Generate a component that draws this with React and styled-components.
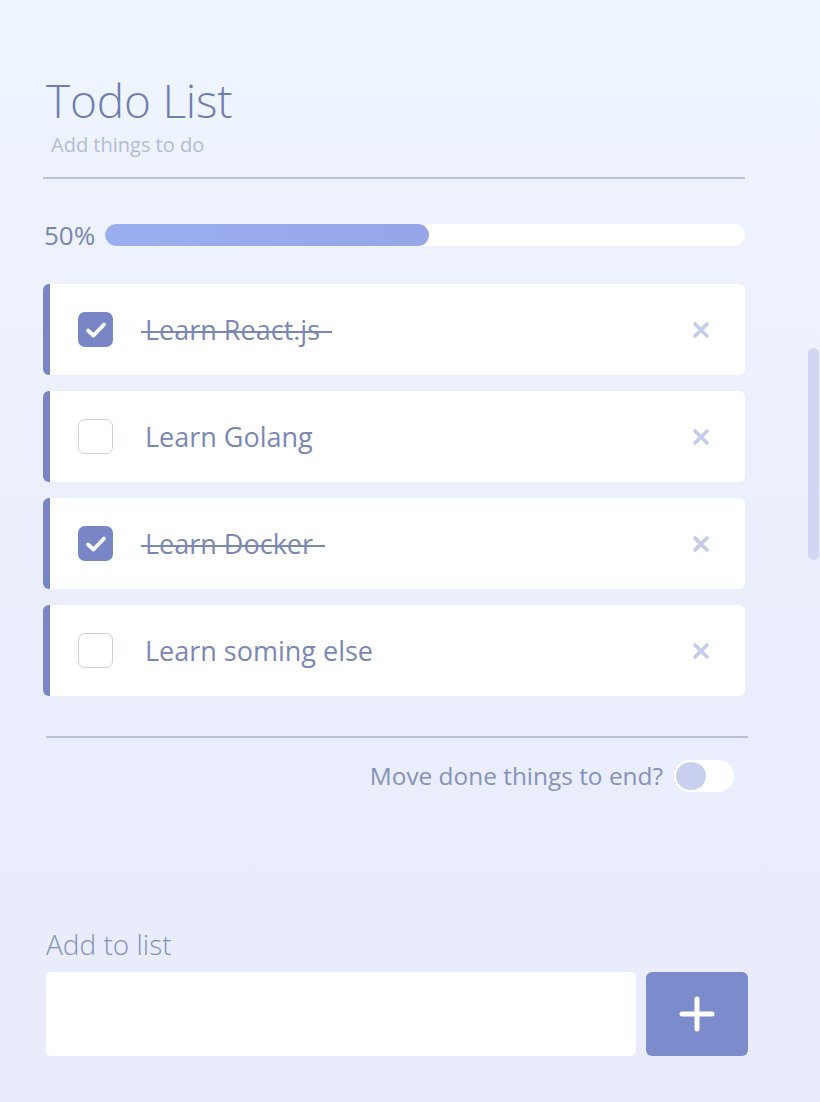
import { useState } from "react";
import styled, { createGlobalStyle } from "styled-components";

const GlobalStyle = createGlobalStyle`
	html, body {
		margin: 0;
		padding: 0;
	}
	body {
		font-family: "Open Sans", "Noto Sans", sans-serif;
	}
`

const Page = styled.div`
	position: relative;
	min-height: 1102px;
	box-sizing: border-box;
	padding: 75px 0px 0px 43px;
	background: linear-gradient(180deg, #eff5fe 0%, #ebeffc 50%, #e9ebfb 100%);
	overflow: hidden;
`

const ScrollThumb = styled.div`
	position: absolute;
	top: 348px;
	right: 1px;
	width: 11px;
	height: 212px;
	border-radius: 6px;
	background: #d1d6f2;
`

const Main = styled.div`
	width: 702px;
`

const Header = styled.header`
	padding: 0px 0px 0px 3px;
	border-bottom: 2px solid #b9c0d8;
	height: 104px;
	box-sizing: border-box;
`

const Title = styled.h1`
	margin: 0;
	font-size: 46px;
	font-weight: 300;
	line-height: 50px;
	color: #6f7db1;
	letter-spacing: -0.2px;
`

const Subtitle = styled.p`
	margin: 7px 0px 0px 5px;
	font-size: 20px;
	line-height: 26px;
	color: #b3bbd6;
`

const ProgressRow = styled.div`
	display: flex;
	align-items: center;
	gap: 10px;
	margin: 45px 0px 0px 1px;
	height: 22px;
`

const Percent = styled.span`
	font-size: 26px;
	line-height: 22px;
	color: #7a86b0;
`

const Track = styled.div`
	flex: 1;
	height: 22px;
	border-radius: 11px;
	background: #ffffff;
	overflow: hidden;
`

const Fill = styled.div`
	height: 100%;
	border-radius: 11px;
	background: linear-gradient(90deg, #9aaeef, #96a6e8);
`

const List = styled.ul`
	list-style: none;
	margin: 38px 0px 0px 0px;
	padding: 0;
	display: flex;
	flex-direction: column;
	gap: 16px;
`

const Item = styled.li`
	display: flex;
	align-items: center;
	height: 91px;
	box-sizing: border-box;
	background: #ffffff;
	border-left: 7px solid #7886c5;
	border-radius: 6px;
	padding: 0px 34px 0px 28px;
`

const Check = styled.span`
	flex: none;
	width: 35px;
	height: 35px;
	box-sizing: border-box;
	border-radius: 7px;
	display: flex;
	align-items: center;
	justify-content: center;
	cursor: pointer;
	background: ${props => props.checked ? "#7886c5" : "#ffffff"};
	border: ${props => props.checked ? "none" : "1.5px solid #cdd1dd"};
`

const Label = styled.span`
	margin-left: 32px;
	flex: 1;
	font-size: 27px;
	color: #7b87b3;
	span {
		padding: 0px 12px 0px 4px;
		margin-left: -4px;
		background: ${props => props.done ? "linear-gradient(#7b87b3, #7b87b3) no-repeat 0 58% / 100% 2px" : "none"};
	}
`

const Remove = styled.button`
	border: none;
	background: none;
	padding: 0;
	width: 20px;
	height: 20px;
	cursor: pointer;
	display: flex;
	align-items: center;
	justify-content: center;
`

const Footer = styled.div`
	margin: 40px -3px 0px 3px;
	border-top: 2px solid #b9c0d8;
	padding-top: 22px;
	display: flex;
	justify-content: flex-end;
	align-items: center;
	gap: 11px;
`

const ToggleText = styled.span`
	font-size: 24.4px;
	line-height: 32px;
	color: #8692bb;
`

const Toggle = styled.button`
	width: 60px;
	height: 32px;
	border: none;
	padding: 2px;
	border-radius: 16px;
	background: #ffffff;
	display: flex;
	justify-content: ${props => props.on ? "flex-end" : "flex-start"};
	cursor: pointer;
	margin-right: 14px;
	&::before{
		content: "";
		width: 30px;
		height: 28px;
		border-radius: 50%;
		background: ${props => props.on ? "#7886c5" : "#c9cfef"};
	}
`

const AddSection = styled.section`
	margin: 136px -3px 0px 3px;
`

const AddLabel = styled.label`
	display: block;
	font-size: 28px;
	font-weight: 300;
	color: #8591bb;
	line-height: 32px;
`

const AddRow = styled.div`
	display: flex;
	gap: 10px;
	margin-top: 12px;
`

const AddInput = styled.input`
	width: 590px;
	height: 84px;
	box-sizing: border-box;
	border: none;
	border-radius: 5px;
	background: #ffffff;
	font-family: inherit;
	font-size: 22px;
	padding: 0px 18px;
	color: #7f8ab4;
	&:focus-visible{
		outline: none;
	}
`

const AddButton = styled.button`
	width: 102px;
	height: 84px;
	border: none;
	border-radius: 6px;
	background: #7b8bcb;
	display: flex;
	align-items: center;
	justify-content: center;
	cursor: pointer;
`

const CheckMark = () => (
	<svg width="22" height="18" viewBox="0 0 22 18" fill="none">
		<path d="M3 9.5 L8.5 14.5 L19 3.5" stroke="#ffffff" strokeWidth="3.8" strokeLinecap="round" strokeLinejoin="round" />
	</svg>
)

const Cross = () => (
	<svg width="18" height="18" viewBox="0 0 18 18">
		<path d="M3 3 L15 15 M15 3 L3 15" stroke="#c5cbe8" strokeWidth="3.6" strokeLinecap="round" />
	</svg>
)

const Plus = () => (
	<svg width="36" height="36" viewBox="0 0 36 36">
		<path d="M18 3 V33 M3 18 H33" stroke="#ffffff" strokeWidth="5" strokeLinecap="round" />
	</svg>
)

const App = () => {
	const [todos, setTodos] = useState([
		{ id: 1, text: "Learn React.js", done: true },
		{ id: 2, text: "Learn Golang", done: false },
		{ id: 3, text: "Learn Docker", done: true },
		{ id: 4, text: "Learn soming else", done: false },
	])
	const [moveDone, setMoveDone] = useState(false)
	const [value, setValue] = useState('')

	const toggle = (id) => setTodos(todos.map(t => t.id === id ? { ...t, done: !t.done } : t))
	const remove = (id) => setTodos(todos.filter(t => t.id !== id))
	const add = () => {
		if (value.trim() === "") return
		setTodos([...todos, { id: Date.now(), text: value, done: false }])
		setValue('')
	}

	const percent = todos.length ? Math.round(todos.filter(t => t.done).length / todos.length * 100) : 0
	const shown = moveDone ? [...todos.filter(t => !t.done), ...todos.filter(t => t.done)] : todos

	return(
		<Page>
			<GlobalStyle />
			<ScrollThumb />
			<Main>
				<Header>
					<Title>Todo List</Title>
					<Subtitle>Add things to do</Subtitle>
				</Header>
				<ProgressRow>
					<Percent>{percent}%</Percent>
					<Track>
						<Fill style={{ width: `${percent * 1.012}%` }} />
					</Track>
				</ProgressRow>
				<List>
					{shown.map(t => (
						<Item key={t.id}>
							<Check checked={t.done} onClick={() => toggle(t.id)}>
								{t.done && <CheckMark />}
							</Check>
							<Label done={t.done}><span>{t.text}</span></Label>
							<Remove onClick={() => remove(t.id)}><Cross /></Remove>
						</Item>
					))}
				</List>
				<Footer>
					<ToggleText>Move done things to end?</ToggleText>
					<Toggle on={moveDone} onClick={() => setMoveDone(!moveDone)} />
				</Footer>
				<AddSection>
					<AddLabel htmlFor="new-todo">Add to list</AddLabel>
					<AddRow>
						<AddInput id="new-todo" value={value} onChange={e => setValue(e.target.value)} onKeyDown={e => e.key === "Enter" && add()} />
						<AddButton onClick={add}><Plus /></AddButton>
					</AddRow>
				</AddSection>
			</Main>
		</Page>
	);
}

export default App
